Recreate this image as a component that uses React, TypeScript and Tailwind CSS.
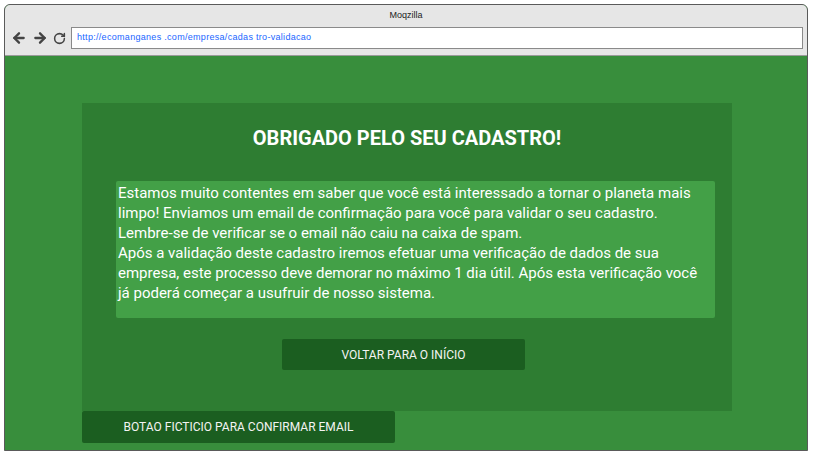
import { ArrowLeft, ArrowRight, RotateCw } from "lucide-react";

export default function App() {
  return (
    <div className="w-[813px] h-[464px] bg-white pt-[4px] pl-[4px]">
      <div className="w-[804px] h-[447px] border border-[#5a5a5a] rounded-t-[6px] overflow-hidden flex flex-col bg-[#388e3c]">
        <header className="h-[51px] shrink-0 bg-[#e6e6e6] border-b border-[#9a9a9a] font-['Liberation_Sans',Arial,sans-serif]">
          <div className="h-[22px] flex items-center justify-center text-[9px] text-[#222]">Moqzilla</div>
          <div className="flex items-center pl-[6px] pr-[4px]">
            <div className="flex items-center gap-[5px] text-[#444]">
              <ArrowLeft className="w-[16px] h-[16px]" strokeWidth={3.5} />
              <ArrowRight className="w-[16px] h-[16px]" strokeWidth={3.5} />
              <RotateCw className="w-[13px] h-[13px]" strokeWidth={2.8} />
            </div>
            <div className="ml-[5px] flex-1 h-[22px] bg-white border border-[#8a8a8a] flex items-center pl-[5px] text-[9px] tracking-[0.3px] text-[#1a66ff]">
              http://ecomanganes .com/empresa/cadas tro-validacao
            </div>
          </div>
        </header>
        <main className="flex-1 pt-[47px] pl-[77px] font-['Roboto',sans-serif] text-white">
          <section className="w-[650px] h-[308px] bg-[#2e7d32] flex flex-col">
            <h1 className="mt-[23px] text-center text-[20px] font-bold leading-[24px]">OBRIGADO PELO SEU CADASTRO!</h1>
            <div className="mt-[31px] ml-[34px] w-[599px] h-[137px] rounded-[2px] bg-[#43a047] pl-[2px] pr-[12px] pt-[2px] text-[15px] leading-[20px]">
              <p>
                Estamos muito contentes em saber que você está interessado a tornar o planeta mais limpo! Enviamos um
                email de confirmação para você para validar o seu cadastro.
              </p>
              <p>Lembre-se de verificar se o email não caiu na caixa de spam.</p>
              <p>
                Após a validação deste cadastro iremos efetuar uma verificação de dados de sua empresa, este processo
                deve demorar no máximo 1 dia útil. Após esta verificação você já poderá começar a usufruir de nosso
                sistema.
              </p>
            </div>
            <button className="mt-[21px] ml-[200px] w-[243px] h-[31px] rounded-[2px] bg-[#1b5e20] text-[12px] text-[#f4f4f4]">
              VOLTAR PARA O INÍCIO
            </button>
          </section>
          <button className="w-[313px] h-[32px] rounded-[2px] bg-[#1b5e20] text-[12px] text-[#f4f4f4]">
            BOTAO FICTICIO PARA CONFIRMAR EMAIL
          </button>
        </main>
      </div>
    </div>
  );
}
